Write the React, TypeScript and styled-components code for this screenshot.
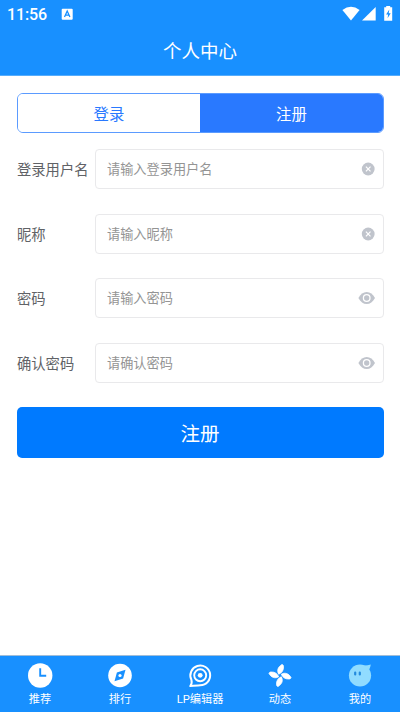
import React from 'react';
import styled, { createGlobalStyle } from 'styled-components';

const GlobalStyle = createGlobalStyle`
  * { box-sizing: border-box; }
  body { margin: 0; background: #fff; }
  button, input { font: inherit; border: 0; padding: 0; background: none; }
`;

const Screen = styled.div`
  width: 400px;
  height: 712px;
  display: flex;
  flex-direction: column;
  overflow: hidden;
  background: #fff;
  font-family: Roboto, 'Noto Sans CJK SC', sans-serif;
`;

const Header = styled.header`
  height: 76px;
  flex: none;
  background: #1890ff;
  border-bottom: 1px solid #56adfc;
  color: #fff;
`;

const StatusBar = styled.div`
  height: 28px;
  display: flex;
  align-items: center;
  padding: 0 7px;
`;

const Time = styled.span`
  width: 54px;
  font-size: 16px;
  line-height: 28px;
  padding-top: 1px;
  letter-spacing: -0.15px;
  font-weight: 500;
`;

const StatusIcons = styled.div`
  display: flex;
  margin-left: auto;
`;

const Title = styled.h1`
  margin: 0;
  height: 47px;
  line-height: 48px;
  text-align: center;
  font-size: 18.5px;
  font-weight: 400;
`;

const Main = styled.main`
  flex: 1;
  padding: 17px 16px 0 17px;
`;

const Segments = styled.div`
  display: flex;
  height: 40px;
  border: 1px solid #5b9bff;
  border-radius: 6px;
  overflow: hidden;
`;

const Segment = styled.button<{ $active?: boolean }>`
  flex: ${(p) => (p.$active ? '0 0 183px' : '1')};
  font-size: 15.4px;
  line-height: 40px;
  padding-top: 1px;
  color: ${(p) => (p.$active ? '#fff' : '#2979ff')};
  background: ${(p) => (p.$active ? '#2979ff' : '#fff')};
`;

const Form = styled.form`
  display: flex;
  flex-direction: column;
  gap: 24.5px;
  padding-top: 16px;
`;

const Field = styled.label`
  display: flex;
  align-items: center;
  height: 40px;
`;

const FieldName = styled.span`
  width: 78px;
  flex: none;
  padding-bottom: 1px;
  font-size: 14.3px;
  color: #606266;
  white-space: nowrap;
`;

const InputBox = styled.span`
  flex: 1;
  height: 40px;
  display: flex;
  align-items: center;
  justify-content: space-between;
  padding: 0 7px 0 11px;
  border: 1px solid #e9e9eb;
  border-radius: 4px;
`;

const Input = styled.input`
  flex: 1;
  min-width: 0;
  height: 36px;
  padding-top: 1px;
  font-size: 13.2px;
  outline: none;
  &::placeholder { color: #949494; opacity: 1; }
`;

const Submit = styled.button`
  display: block;
  width: 100%;
  height: 51.5px;
  margin-top: 24px;
  padding-top: 2px;
  padding-right: 1px;
  border-radius: 5px;
  background: #007aff;
  color: #fff;
  font-size: 19.5px;
  line-height: 51px;
`;

const TabBar = styled.nav`
  display: flex;
  flex: none;
  height: 57px;
  border-top: 1px solid #a0bdd8;
  background: #1890ff;
`;

const Tab = styled.a`
  flex: 1;
  display: flex;
  flex-direction: column;
  align-items: center;
  padding-top: 7px;
  color: #fff;
  font-size: 11.2px;
  line-height: 16px;
  white-space: nowrap;
`;

const TabIcon = styled.svg`
  width: 26px;
  height: 26px;
  margin-bottom: 3px;
`;

const ClearIcon = () => (
  <svg width="15" height="26" viewBox="0 0 15 26">
    <circle cx="7.2" cy="13" r="6.4" fill="#c0c4cc" />
    <path d="M4.9 10.7l4.6 4.6M9.5 10.7l-4.6 4.6" stroke="#fff" strokeWidth="1.2" />
  </svg>
);

const EyeIcon = () => (
  <svg width="18" height="26" viewBox="0 0 18 26">
    <path d="M.4 13C2.4 9.1 5.4 6.9 8.7 6.9s6.300 2.200 8.300 6.100C15 16.900 12 19.100 8.700 19.100S2.400 16.900.4 13Z" fill="#c0c4cc" />
    <circle cx="8.7" cy="13" r="3.3" fill="none" stroke="#fff" strokeWidth="1.3" />
  </svg>
);

const fields = [
  { name: '登录用户名', hint: '请输入登录用户名', secret: false },
  { name: '昵称', hint: '请输入昵称', secret: false },
  { name: '密码', hint: '请输入密码', secret: true },
  { name: '确认密码', hint: '请确认密码', secret: true },
];

const petal = 'M11.7 11.2C9.6 7.6 11 3.7 15 1.5C16 1.6 16.500 2.400 16.500 3.700C16.600 7.300 15 9.900 11.700 11.200Z';

const tabs = [
  {
    name: '推荐',
    icon: (
      <>
        <circle cx="13.2" cy="12.5" r="12.2" fill="#fff" />
        <path d="M13.2 5.2v7.6h6" fill="none" stroke="#1890ff" strokeWidth="1.9" />
      </>
    ),
  },
  {
    name: '排行',
    icon: (
      <>
        <circle cx="13" cy="12.5" r="11.8" fill="#fff" />
        <path d="M18.5 6.8L16.1 15.5L7.5 18.2L9.900 9.500Z" fill="#1890ff" />
        <circle cx="13" cy="12.5" r="1.6" fill="#fff" />
      </>
    ),
  },
  {
    name: 'LP编辑器',
    icon: (
      <>
        <path d="M4.400 16.800A9.900 9.900 0 1 1 13.200 22.300C10 22.500 6.500 22.600 3.300 23.100C4.800 21.100 5 18.900 4.400 16.800Z" fill="none" stroke="#fff" strokeWidth="2" strokeLinejoin="round" />
        <circle cx="13.2" cy="12.3" r="6" fill="none" stroke="#fff" strokeWidth="1.9" />
        <circle cx="13.2" cy="12.3" r="2.4" fill="#fff" />
      </>
    ),
  },
  {
    name: '动态',
    icon: (
      <g fill="#fff" stroke="#fff" strokeWidth="0.8" strokeLinejoin="round">
        {[0, 90, 180, 270].map((angle) => (
          <path key={angle} d={petal} transform={`rotate(${angle} 13 12.5)`} />
        ))}
      </g>
    ),
  },
  {
    name: '我的',
    icon: (
      <>
        <circle cx="13" cy="12.5" r="11.1" fill="#91dcff" />
        <path d="M17 2.5Q20.5 2.6 23.8 1.4Q23.4 4.500 22 7Z" fill="#91dcff" />
        <path d="M8.200 9.600v1.800M12.800 9.600v1.800" stroke="#258bdd" strokeWidth="2.200" strokeLinecap="round" />
      </>
    ),
  },
];

export default function App() {
  return (
    <Screen>
      <GlobalStyle />
      <Header>
        <StatusBar>
          <Time>11:56</Time>
          <svg width="13" height="13" viewBox="0 0 13 13">
            <rect x="0.7" y="0.7" width="11" height="11" rx="1" fill="#fff" />
            <path d="M3.500 9L6.200 3L8.900 9M4.500 7.200h3.400" fill="none" stroke="#1890ff" strokeWidth="1.3" />
          </svg>
          <StatusIcons>
            <svg width="52" height="18" viewBox="341 4 52 18">
              <path d="M342.400 9Q351 2.400 359.600 9L351 19.600Z" fill="#fff" />
              <path d="M375.700 6V19.500H362Z" fill="#fff" />
              <path d="M386.200 5h4v1.300h2V19.800h-8V6.300h2Z" fill="#fff" />
              <path d="M389.300 8.500l-3.200 5h2l-.5 3.800 3.100-5h-2Z" fill="#1890ff" />
            </svg>
          </StatusIcons>
        </StatusBar>
        <Title>个人中心</Title>
      </Header>
      <Main>
        <Segments>
          <Segment type="button">登录</Segment>
          <Segment type="button" $active>注册</Segment>
        </Segments>
        <Form>
          {fields.map((f) => (
            <Field key={f.name}>
              <FieldName>{f.name}</FieldName>
              <InputBox>
                <Input type={f.secret ? 'password' : 'text'} placeholder={f.hint} />
                {f.secret ? <EyeIcon /> : <ClearIcon />}
              </InputBox>
            </Field>
          ))}
        </Form>
        <Submit type="button">注册</Submit>
      </Main>
      <TabBar>
        {tabs.map((t) => (
          <Tab key={t.name}>
            <TabIcon viewBox="0 0 26 26">{t.icon}</TabIcon>
            {t.name}
          </Tab>
        ))}
      </TabBar>
    </Screen>
  );
}
